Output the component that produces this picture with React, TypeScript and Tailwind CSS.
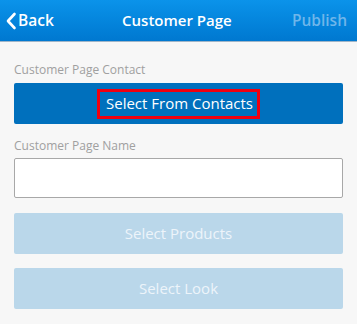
import React from "react";

export default function App() {
  return (
    <div className="w-[357px] h-[324px] bg-[#f7f7f7] overflow-hidden" style={{ fontFamily: '"Open Sans", sans-serif' }}>
      <div className="h-[42px] bg-gradient-to-b from-[#0b93ea] to-[#0078d0] border-b border-[#9fb5c8] flex items-center justify-between px-[5px]">
        <div className="flex items-center text-white text-[15.5px] font-semibold">
          <svg width="12" height="18" viewBox="0 0 12 18" className="mr-[1px]">
            <path d="M9.5 2 L3 9 L9.5 16" fill="none" stroke="white" strokeWidth="2.6" strokeLinecap="round" strokeLinejoin="round" />
          </svg>
          <span>Back</span>
        </div>
        <div className="text-white text-[15px] font-semibold ml-[8px]">Customer Page</div>
        <div className="text-[#6fb6ea] text-[15.5px] font-semibold pr-[5px]">Publish</div>
      </div>
      <div className="px-[14px]">
        <div className="text-[12px] text-[#a0a0a0] mt-[20px] leading-[16px]">Customer Page Contact</div>
        <div className="mt-[5px] h-[41px] bg-[#0070bd] rounded-[2px] flex items-center justify-center">
          <div className="border-[3px] border-[#f0000f] pl-[6px] pr-[4px] h-[30px] flex items-center text-white text-[15px]">Select From Contacts</div>
        </div>
        <div className="text-[12px] text-[#a0a0a0] mt-[14px] leading-[16px]">Customer Page Name</div>
        <div className="mt-[4px] h-[40px] bg-white border border-[#a8a8a8] rounded-[2px]"></div>
        <div className="mt-[15px] h-[41px] bg-[#bad7ea] rounded-[2px] flex items-center justify-center text-[#edf4fa] text-[15px]">Select Products</div>
        <div className="mt-[14px] h-[41px] bg-[#bad7ea] rounded-[2px] flex items-center justify-center text-[#edf4fa] text-[15px]">Select Look</div>
      </div>
    </div>
  );
}
